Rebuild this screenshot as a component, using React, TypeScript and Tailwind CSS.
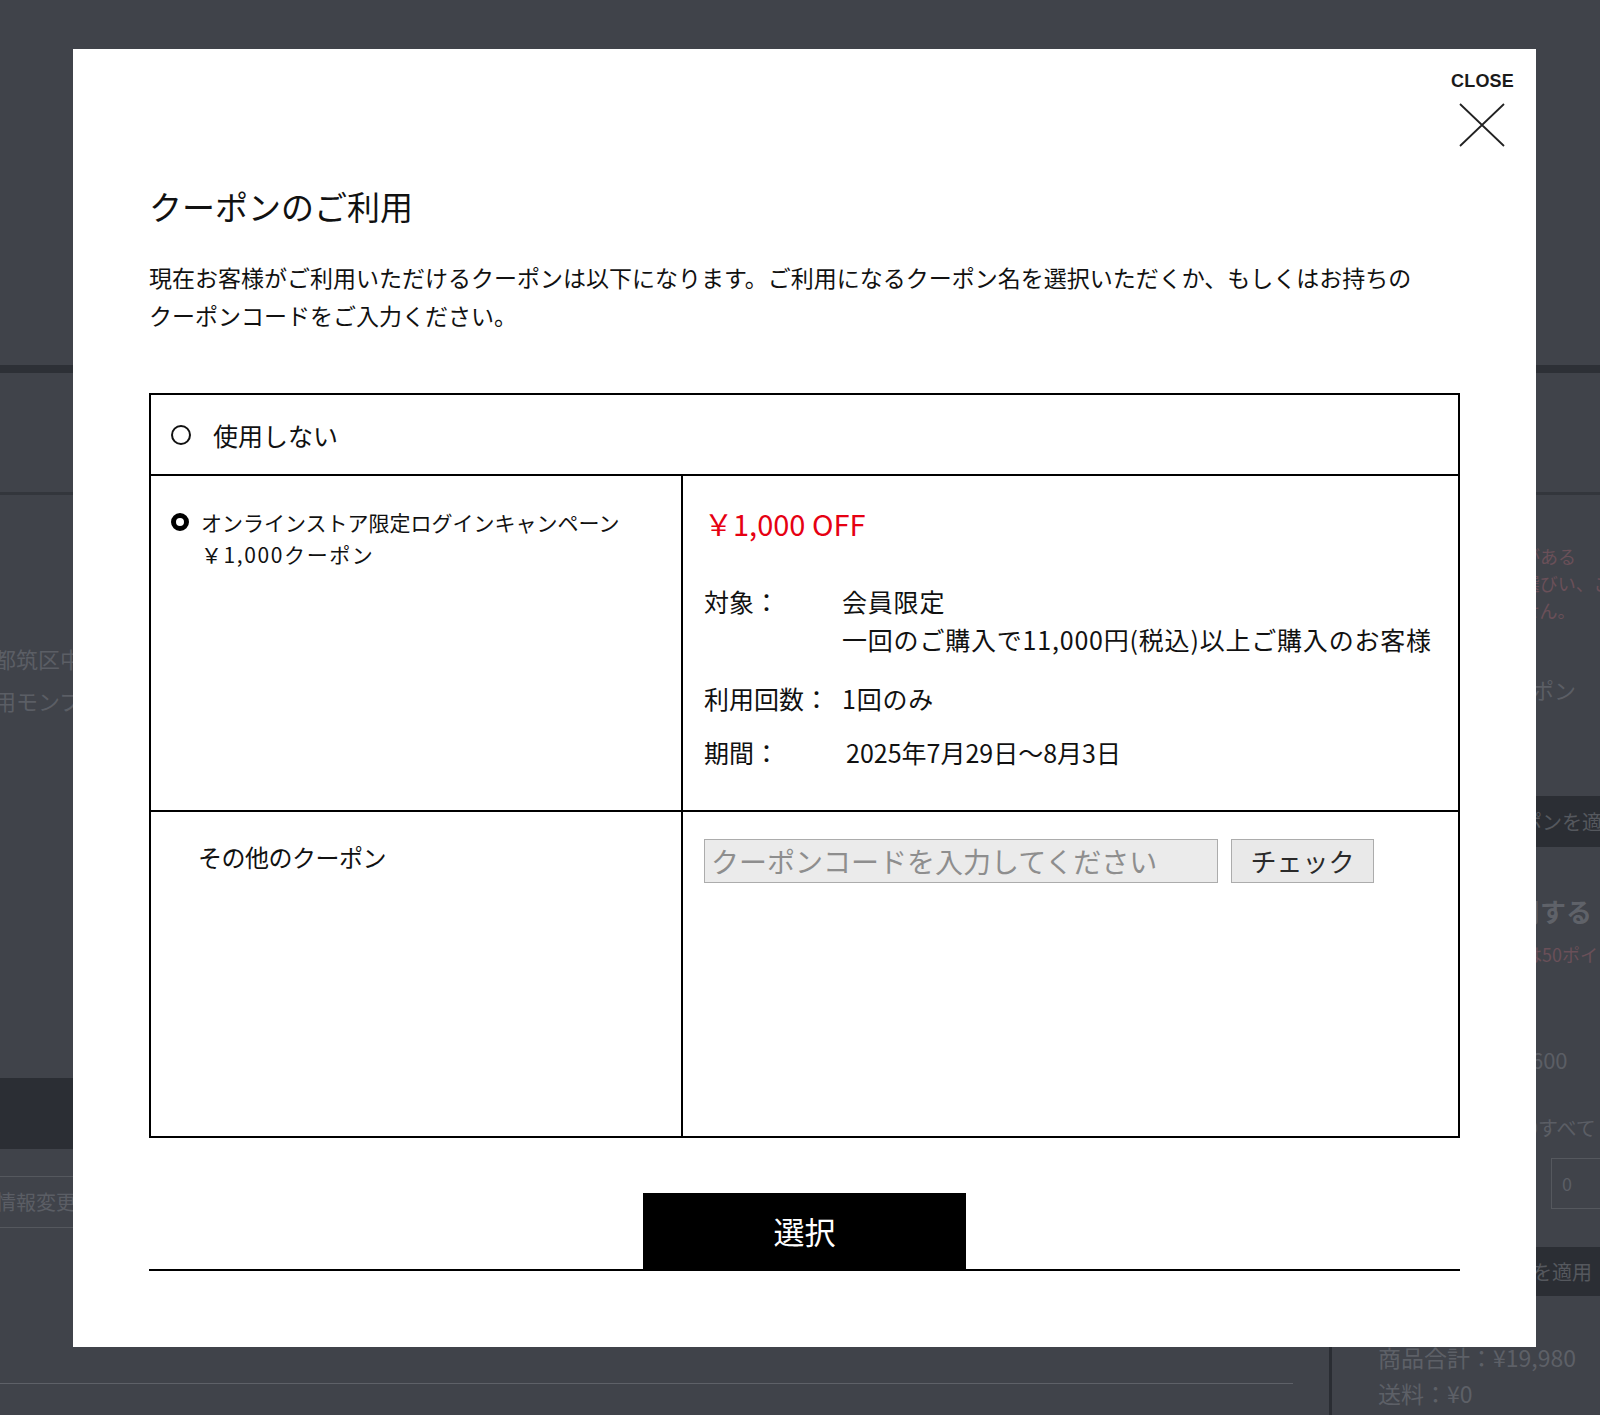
import { useState } from "react";

const FONT = "font-['Noto_Sans_CJK_JP','Noto_Sans',sans-serif]";

type CouponDetail = { label: string; lines: string[]; value: string; gap: string };

const details: CouponDetail[] = [
  {
    label: "対象：",
    lines: ["会員限定", "一回のご購入で11,000円(税込)以上ご購入のお客様"],
    value: "tracking-[0.8px]",
    gap: "mt-[41px]",
  },
  { label: "利用回数：", lines: ["1回のみ"], value: "tracking-[0.8px]", gap: "mt-[21px]" },
  { label: "期間：", lines: ["2025年7月29日〜8月3日"], value: "pl-[4px]", gap: "mt-[16px]" },
];

function Radio({ checked }: { checked: boolean }) {
  return checked ? (
    <span className="mt-[7px] block h-[18px] w-[18px] shrink-0 rounded-full border-[5px] border-black bg-white" />
  ) : (
    <span className="block h-[20px] w-[20px] shrink-0 rounded-full border-2 border-[#111] bg-white" />
  );
}

// faded page that sits under the overlay
function BackgroundPage() {
  return (
    <div className="flex h-full flex-col text-[#5b5e65]">
      <div className="h-[365px] shrink-0" />
      <div className="h-[8px] shrink-0 bg-[#2d3036]" />
      <div className="h-[119px] shrink-0" />
      <div className="h-[3px] shrink-0 bg-[#33363c]" />
      <div className="flex flex-1">
        <main className="flex w-[1329px] shrink-0 flex-col">
          <div className="-ml-[6px] mt-[142px] whitespace-nowrap text-[22px] leading-[42px]">
            <p>都筑区中川中央</p>
            <p>用モンブラン</p>
          </div>
          <div className="mt-[357px] h-[71px] w-full bg-[#2b2e34]" />
          <div className="mt-[27px] flex h-[52px] w-[1293px] items-center border-y border-[#55585e] text-[20px]">
            <span className="-ml-[4px]">情報変更</span>
          </div>
          <div className="mt-[155px] h-px w-[1293px] bg-[#5e6168]" />
        </main>
        <aside className="flex flex-1 flex-col overflow-hidden whitespace-nowrap border-l-[3px] border-[#2a2d33] pl-[46px]">
          <div className="mt-[48px] text-[18px] leading-[27px] text-[#6a5059]">
            <p>お持ちのクーポンがある</p>
            <p>場合は以下よりお選びい、ご</p>
            <p>ご利用いただけません。</p>
          </div>
          <div className="flex h-[130px] items-center pl-[110px] text-[22px]">クーポン</div>
          <div className="-ml-[46px] mt-[42px] flex h-[51px] items-center bg-[#2b2e34] pl-[150px] text-[20px] text-[#55585e]">
            クーポンを適用
          </div>
          <div className="mt-[33px] flex h-[60px] items-center pl-[110px] text-[26px] font-bold text-[#5f6269]">
            利用する
          </div>
          <div className="flex h-[28px] items-center pl-[110px] text-[18px] text-[#6a5059]">利用は50ポイント</div>
          <div className="mt-[71px] flex h-[40px] items-center pl-[104px] text-[22px]">ント 600</div>
          <div className="mt-[29px] flex h-[40px] items-center pl-[140px] text-[20px]">○すべて</div>
          <div className="ml-[173px] mt-[10px] flex h-[51px] w-[120px] items-center border border-[#55585e] pl-[10px] text-[18px]">
            0
          </div>
          <div className="-ml-[46px] mt-[38px] flex h-[49px] items-center bg-[#2b2e34] pl-[180px] text-[20px] text-[#55585e]">
            トを適用
          </div>
          <div className="mt-[43px] text-[23px] leading-[36px] text-[#5d6067]">
            <p>商品合計：¥19,980</p>
            <p>送料：¥0</p>
          </div>
        </aside>
      </div>
    </div>
  );
}

export default function App() {
  const [selected, setSelected] = useState<"none" | "login">("login");
  const [code, setCode] = useState("");

  return (
    <div className={`relative h-[1415px] w-full overflow-hidden bg-[#40434a] ${FONT}`}>
      <BackgroundPage />

      {/* coupon modal */}
      <div className="absolute left-[73px] top-[49px] h-[1298px] w-[1463px] bg-white px-[76px] pt-[141px] text-[#111]">
        <button className="absolute right-[22px] top-[23px] flex flex-col items-center text-[#1a1a1a]">
          <span className="font-['Liberation_Sans',Arial,sans-serif] text-[18px] font-bold leading-none tracking-[0.2px]">
            CLOSE
          </span>
          <svg className="mt-[13px]" width="46" height="44" viewBox="0 0 46 44" fill="none">
            <path d="M1 1L45 43M45 1L1 43" stroke="#222" strokeWidth="1.8" />
          </svg>
        </button>

        <h2 className="text-[33px] font-normal leading-none">クーポンのご利用</h2>
        <p className="mt-[35px] whitespace-nowrap text-[23px] leading-[38px]">
          現在お客様がご利用いただけるクーポンは以下になります。ご利用になるクーポン名を選択いただくか、もしくはお持ちの
          <br />
          クーポンコードをご入力ください。
        </p>

        <div className="mt-[59px] border-2 border-black">
          <div
            className="flex h-[81px] cursor-pointer items-center border-b-2 border-black pl-[20px] pt-[1px]"
            onClick={() => setSelected("none")}
          >
            <Radio checked={selected === "none"} />
            <span className="ml-[22px] text-[25px] leading-none">使用しない</span>
          </div>

          <div className="grid h-[336px] grid-cols-[532px_1fr] border-b-2 border-black">
            <div
              className="flex cursor-pointer items-start gap-[12px] border-r-2 border-black pl-[20px] pt-[30px]"
              onClick={() => setSelected("login")}
            >
              <Radio checked={selected === "login"} />
              <p className="text-[21px] leading-[32px]">
                オンラインストア限定ログインキャンペーン
                <br />
                <span className="tracking-[1.6px]">￥1,000クーポン</span>
              </p>
            </div>
            <div className="pl-[21px] pt-[29px]">
              <p className="text-[29px] leading-[36px] text-[#e60012]">￥1,000 OFF</p>
              {details.map((d) => (
                <div key={d.label} className={`flex text-[25px] leading-[38px] ${d.gap}`}>
                  <span className="w-[138px] shrink-0">{d.label}</span>
                  <div className={`whitespace-nowrap ${d.value}`}>
                    {d.lines.map((l) => (
                      <p key={l}>{l}</p>
                    ))}
                  </div>
                </div>
              ))}
            </div>
          </div>

          <div className="grid h-[324px] grid-cols-[532px_1fr]">
            <div className="border-r-2 border-black pl-[47px] pt-[29px]">
              <p className="text-[24px] leading-[32px] tracking-[-0.5px]">その他のクーポン</p>
            </div>
            <div className="flex items-start gap-[13px] pl-[21px] pt-[27px]">
              <input
                value={code}
                onChange={(e) => setCode(e.target.value)}
                placeholder="クーポンコードを入力してください"
                className="h-[44px] w-[514px] border border-[#acacac] bg-[#ebebeb] px-[6px] text-[28px] text-[#333] outline-none placeholder:text-[#8e8e8e]"
              />
              <button className="h-[44px] w-[143px] border border-[#acacac] bg-[#e9e9e9] text-[26px] leading-none text-[#2a2a2a]">
                チェック
              </button>
            </div>
          </div>
        </div>

        <div className="mt-[55px] flex justify-center border-b-2 border-black">
          <button className="h-[76px] w-[323px] bg-black text-[31px] text-white">選択</button>
        </div>
      </div>
    </div>
  );
}
